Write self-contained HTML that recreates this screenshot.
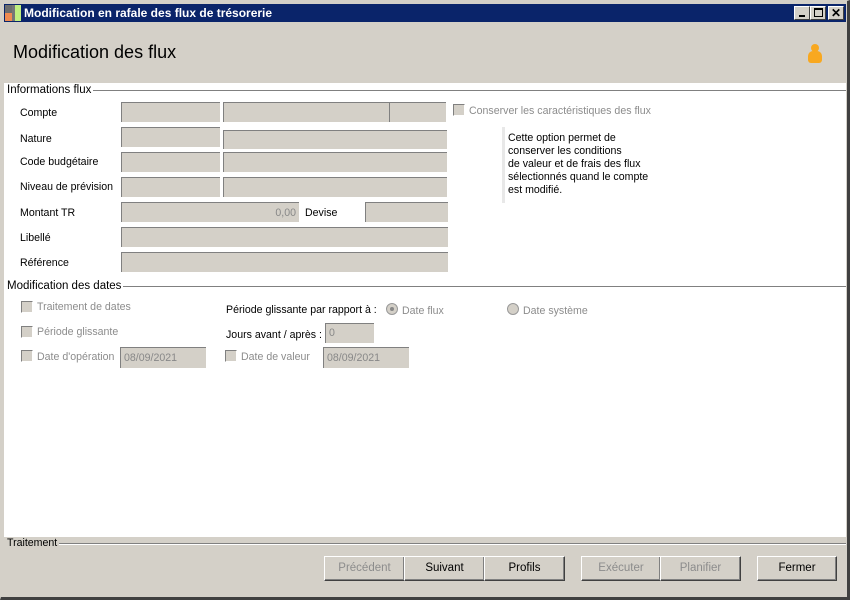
<!DOCTYPE html><html><head><meta charset="utf-8"><style>
*{box-sizing:border-box;margin:0;padding:0}
body{width:850px;height:600px;position:relative;background:#d4d0c8;font-family:"Liberation Sans",Tahoma,sans-serif;font-size:10.6px;color:#000;overflow:hidden}
.a{position:absolute}
.in{position:absolute;background:#d4d0c8;border-top:1px solid #808080;border-left:1px solid #808080;color:#888;padding:4px 3px 0;font-size:10.6px}
.cb{position:absolute;width:12px;height:12px;background:#d4d0c8;border-top:1px solid #808080;border-left:1px solid #808080;border-right:1px solid #fff;border-bottom:1px solid #fff}
.g{color:#8c8c8c}
.btn{position:absolute;top:556px;height:25px;background:#d4d0c8;border:1px solid;border-color:#fff #404040 #404040 #fff;box-shadow:inset -1px -1px #808080;text-align:center;line-height:22px;font-size:11.5px}
.sec{position:absolute;left:7px;font-size:11.5px;background:#fff;padding-right:2px}
.ln{position:absolute;height:2px;border-top:1px solid #808080;border-bottom:1px solid #fff}
.rd{position:absolute;width:12px;height:12px;border-radius:50%;background:#d4d0c8;border:1px solid #999}
</style></head><body>
<div class="a" style="left:0;top:0;width:850px;height:600px;border:1px solid #d4d0c8;border-right:3px solid #404040;border-bottom:3px solid #404040"></div>
<div class="a" style="left:4px;top:4px;width:842px;height:18px;background:#0a246a"></div>
<div class="a" style="left:5px;top:5px;width:7px;height:8px;background:#6d6d6d"></div>
<div class="a" style="left:5px;top:13px;width:7px;height:8px;background:#f08a50"></div>
<div class="a" style="left:12px;top:5px;width:3px;height:16px;background:#777"></div>
<div class="a" style="left:15px;top:5px;width:6px;height:16px;background:#c0f080"></div>
<div class="a" style="left:24px;top:5px;color:#fff;font-weight:bold;font-size:12px;line-height:16px">Modification en rafale des flux de trésorerie</div>
<div class="a" style="left:794px;top:6px;width:16px;height:14px;background:#d4d0c8;border:1px solid;border-color:#fff #404040 #404040 #fff"><div class="a" style="left:4px;top:8px;width:6px;height:2px;background:#000"></div></div>
<div class="a" style="left:810px;top:6px;width:16px;height:14px;background:#d4d0c8;border:1px solid;border-color:#fff #404040 #404040 #fff"><div class="a" style="left:3px;top:1px;width:9px;height:9px;border:1px solid #000;border-top-width:2px"></div></div>
<div class="a" style="left:828px;top:6px;width:16px;height:14px;background:#d4d0c8;border:1px solid;border-color:#fff #404040 #404040 #fff;font-size:12px;font-weight:bold;text-align:center;line-height:12px">✕</div>
<div class="a" style="left:13px;top:42px;font-size:18px">Modification des flux</div>
<div class="a" style="left:811px;top:44px;width:8px;height:8px;border-radius:50%;background:#f8a820"></div>
<div class="a" style="left:808px;top:51px;width:14px;height:12px;border-radius:5px 5px 3px 3px;background:#f8a820"></div>
<div class="a" style="left:4px;top:83px;width:842px;height:454px;background:#fff"></div>
<div class="ln" style="left:7px;top:90px;width:839px"></div>
<div class="sec" style="top:84px">Informations flux</div>
<div class="a" style="left:20px;top:107px">Compte</div>
<div class="a" style="left:20px;top:133px">Nature</div>
<div class="a" style="left:20px;top:156px">Code budgétaire</div>
<div class="a" style="left:20px;top:181px">Niveau de prévision</div>
<div class="a" style="left:20px;top:207px">Montant TR</div>
<div class="a" style="left:20px;top:232px">Libellé</div>
<div class="a" style="left:20px;top:257px">Référence</div>
<div class="in" style="left:121px;top:102px;width:99px;height:20px"></div>
<div class="in" style="left:223px;top:102px;width:166px;height:20px"></div>
<div class="in" style="left:389px;top:102px;width:57px;height:20px"></div>
<div class="in" style="left:121px;top:127px;width:99px;height:20px"></div>
<div class="in" style="left:223px;top:130px;width:224px;height:19px"></div>
<div class="in" style="left:121px;top:152px;width:99px;height:20px"></div>
<div class="in" style="left:223px;top:152px;width:224px;height:20px"></div>
<div class="in" style="left:121px;top:177px;width:99px;height:20px"></div>
<div class="in" style="left:223px;top:177px;width:224px;height:20px"></div>
<div class="in" style="left:121px;top:202px;width:178px;height:20px;text-align:right">0,00</div>
<div class="a" style="left:305px;top:207px">Devise</div>
<div class="in" style="left:365px;top:202px;width:83px;height:20px"></div>
<div class="in" style="left:121px;top:227px;width:327px;height:20px"></div>
<div class="in" style="left:121px;top:252px;width:327px;height:20px"></div>
<div class="cb" style="left:453px;top:104px"></div>
<div class="a g" style="left:469px;top:105px">Conserver les caractéristiques des flux</div>
<div class="a" style="left:502px;top:127px;width:3px;height:76px;background:#e8e8e8"></div>
<div class="a" style="left:508px;top:132px;line-height:13px">Cette option permet de<br>conserver les conditions<br>de valeur et de frais des flux<br>sélectionnés quand le compte<br>est modifié.</div>
<div class="ln" style="left:7px;top:286px;width:839px"></div>
<div class="sec" style="top:280px">Modification des dates</div>
<div class="cb" style="left:21px;top:301px"></div><div class="a g" style="left:37px;top:301px">Traitement de dates</div>
<div class="cb" style="left:21px;top:326px"></div><div class="a g" style="left:37px;top:326px">Période glissante</div>
<div class="cb" style="left:21px;top:350px"></div><div class="a g" style="left:37px;top:351px">Date d'opération</div>
<div class="in" style="left:120px;top:347px;width:86px;height:21px">08/09/2021</div>
<div class="a" style="left:226px;top:304px">Période glissante par rapport à :</div>
<div class="rd" style="left:386px;top:303px"><div class="a" style="left:3px;top:3px;width:4px;height:4px;border-radius:50%;background:#888"></div></div>
<div class="a g" style="left:402px;top:305px">Date flux</div>
<div class="rd" style="left:507px;top:303px"></div>
<div class="a g" style="left:523px;top:305px">Date système</div>
<div class="a" style="left:226px;top:329px">Jours avant / après :</div>
<div class="in" style="left:325px;top:323px;width:49px;height:20px;padding-top:3px">0</div>
<div class="cb" style="left:225px;top:350px"></div><div class="a g" style="left:241px;top:351px">Date de valeur</div>
<div class="in" style="left:323px;top:347px;width:86px;height:21px">08/09/2021</div>
<div class="ln" style="left:7px;top:543px;width:839px"></div>
<div class="a" style="left:7px;top:537px;font-size:10.6px;background:#d4d0c8;padding-right:2px">Traitement</div>
<div class="btn g" style="left:324px;width:81px">Précédent</div>
<div class="btn" style="left:404px;width:81px">Suivant</div>
<div class="btn" style="left:484px;width:81px">Profils</div>
<div class="btn g" style="left:581px;width:80px">Exécuter</div>
<div class="btn g" style="left:660px;width:81px">Planifier</div>
<div class="btn" style="left:757px;width:80px">Fermer</div>
</body></html>
